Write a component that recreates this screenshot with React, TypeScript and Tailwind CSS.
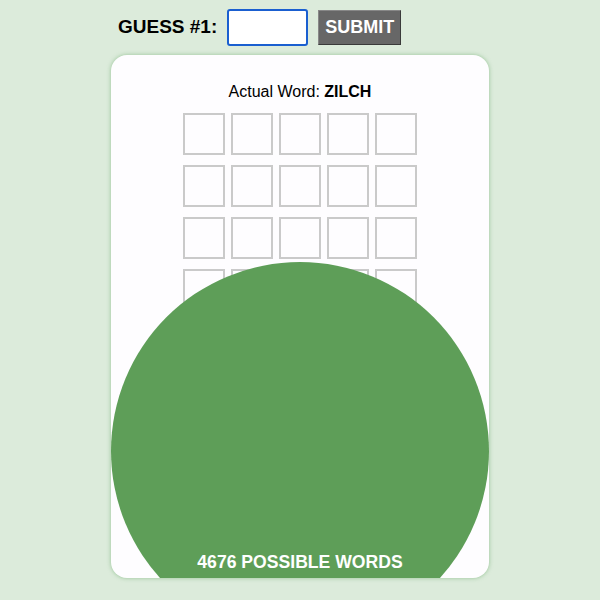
import { useState } from 'react';

const ROWS = 6;
const COLS = 5;

export default function App() {
  const [guess, setGuess] = useState('');

  return (
    <div className="min-h-[600px] bg-[#dcebdb] font-['Liberation_Sans',Arial,sans-serif] text-black">
      <div className="flex h-[53px] items-center pl-[118px] pt-[1px]">
        <span className="text-[19px] font-bold">GUESS #1:</span>
        <input
          value={guess}
          onChange={(e) => setGuess(e.target.value)}
          autoFocus
          className="ml-[10px] h-[37px] w-[81px] rounded-[3px] border-2 border-[#1a5fd0] bg-white px-1 text-[18px] outline-none"
        />
        <button className="ml-[10px] h-[35px] w-[83px] border border-[#3a3a3a] border-l-[#888] border-t-[#888] bg-[#676767] text-[18px] font-bold text-white">
          SUBMIT
        </button>
      </div>

      <div className="relative mx-auto mt-[2px] h-[523px] w-[378px] overflow-hidden rounded-[16px] bg-[#fefdff] shadow-[0_0_4px_rgba(90,160,90,0.55)]">
        <p className="pt-[27px] text-center text-[16px] leading-[20px]">
          Actual Word: <b>ZILCH</b>
        </p>
        <div className="mt-[11px] grid grid-cols-[repeat(5,42px)] justify-center gap-x-[6px] gap-y-[10px]">
          {Array.from({ length: ROWS * COLS }).map((_, i) => (
            <div key={i} className="h-[42px] w-[42px] border-2 border-[#cacaca]" />
          ))}
        </div>

        <div className="absolute left-0 top-[207px] h-[378px] w-[378px] rounded-full bg-[#5e9e58]" />
        <p className="absolute bottom-[5px] left-0 right-0 text-center text-[17.6px] font-bold leading-[22px] text-white">
          4676 POSSIBLE WORDS
        </p>
      </div>
    </div>
  );
}
